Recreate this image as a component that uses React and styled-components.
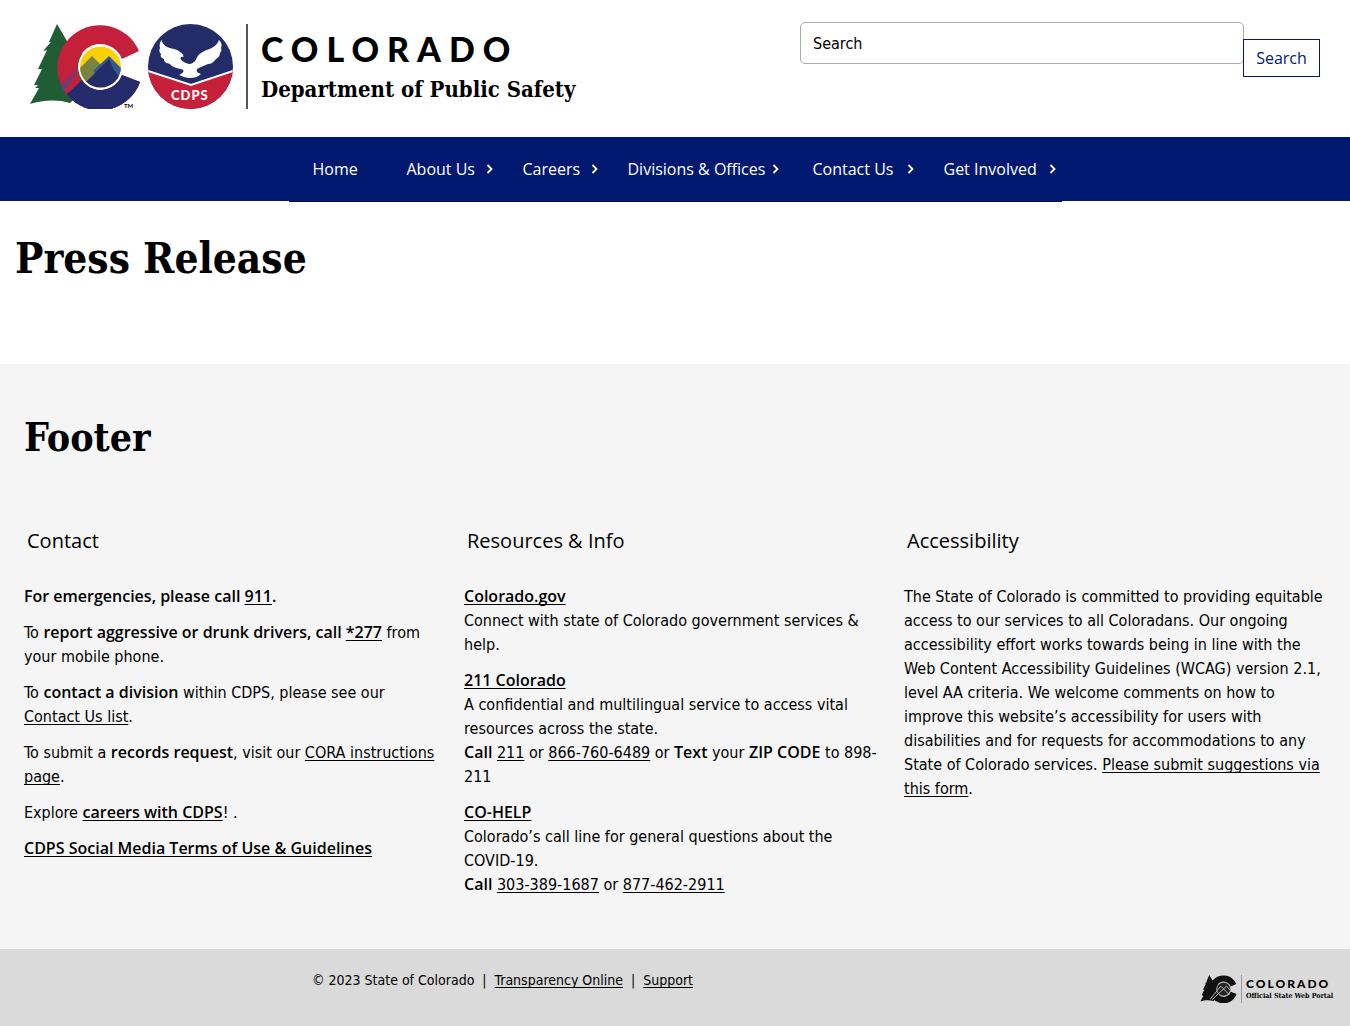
import React from "react";
import styled, { createGlobalStyle } from "styled-components";

const body = `"DejaVu Sans Condensed", "Open Sans", sans-serif`;
const sans = `"Open Sans", sans-serif`;
const slab = `"DejaVu Serif Condensed", "DejaVu Serif", serif`;

const GlobalStyle = createGlobalStyle`
  *, *::before, *::after { box-sizing: border-box; }
  body {
    margin: 0;
    background: #fff;
    color: #000;
    font: 16px/24px ${body};
  }
  h1, h2, h3, p, ul { margin: 0; padding: 0; }
  a { color: inherit; }
  svg { display: block; flex: none; }
`;

const Header = styled.header`
  display: flex;
  justify-content: space-between;
  align-items: flex-start;
  padding: 22px 30px 28px;
`;

const Brand = styled.a`
  display: flex;
  gap: 8px;
  margin-top: 2px;
  text-decoration: none;
`;

const BrandText = styled.span`
  display: flex;
  flex-direction: column;
  gap: 8px;
  margin-left: 5px;
  padding: 5px 0 0 13px;
  border-left: 2px solid #58585a;
  white-space: nowrap;
`;

const BrandState = styled.span`
  font: 900 34px/40px Lato, sans-serif;
  letter-spacing: 8px;
`;

const BrandDept = styled.span`
  font: bold 22px/24px ${slab};
`;

const SearchForm = styled.form`
  display: flex;
  align-items: flex-start;
  width: 520px;
`;

const SearchInput = styled.input`
  flex: 1;
  min-width: 0;
  height: 42px;
  padding: 0 12px;
  border: 1px solid #aaa;
  border-radius: 5px;
  color: #000;
  font: 16px/24px ${body};
  &::placeholder { color: #000; opacity: 1; }
`;

const SearchButton = styled.button`
  width: 77px;
  height: 38px;
  margin: 17px 0 0 -1px;
  padding: 0;
  border: 1px solid #001970;
  background: #fff;
  color: #001970;
  font: 16px/24px ${sans};
`;

const NavBar = styled.nav`
  height: 64px;
  background: #001970;
`;

const NavList = styled.ul`
  display: flex;
  justify-content: center;
  width: fit-content;
  height: 65px;
  margin: 0 auto;
  border-bottom: 1px solid #001450;
  list-style: none;
`;

const NavItem = styled.li`
  width: ${(p) => p.$width}px;
`;

const NavLink = styled.a`
  display: flex;
  align-items: center;
  justify-content: space-between;
  height: 64px;
  padding: 0 ${(p) => (p.$tight ? 10 : 6)}px 0 24px;
  color: #fff;
  font: 16px/24px ${sans};
  text-decoration: none;
  white-space: nowrap;
`;

const Main = styled.main`
  padding: 31px 15px 78px;
`;

const PageTitle = styled.h1`
  font: bold 42px/54px ${slab};
`;

const Footer = styled.footer`
  padding: 47px 24px 52px;
  background: #f5f5f5;
`;

const FooterTitle = styled.h2`
  font: bold 39px/52px ${slab};
`;

const Columns = styled.div`
  display: grid;
  grid-template-columns: repeat(3, 1fr);
  gap: 18px;
  margin-top: 62px;
`;

const ColumnTitle = styled.h3`
  margin-bottom: 28px;
  padding-left: 3px;
  font: 20px/32px ${sans};
`;

const Text = styled.p`
  & + & { margin-top: 12px; }
`;

const Link = styled.a`
  text-decoration: underline;
  text-decoration-thickness: 1px;
  text-underline-offset: 2px;
  text-decoration-skip-ink: none;
  white-space: ${(p) => (p.$nowrap ? "nowrap" : "inherit")};
`;

const Strong = styled.strong`
  font-family: ${sans};
  font-weight: 600;
  line-height: 16px;
`;

const BottomBar = styled.div`
  display: grid;
  grid-template-columns: 1fr 345px;
  align-items: start;
  padding-top: 19px;
  height: 78px;
  background: #dadada;
`;

const Copyright = styled.p`
  font-size: 14px;
  line-height: 24px;
  text-align: center;
  white-space: pre;
`;

const Portal = styled.a`
  display: flex;
  justify-content: flex-end;
  gap: 4px;
  margin-top: 7px;
  padding-right: 15px;
  text-decoration: none;
`;

const PortalText = styled.span`
  display: flex;
  flex-direction: column;
  width: 94px;
  padding: 2px 0 0 4px;
  border-left: 1px solid #999;
  white-space: nowrap;
`;

const PortalState = styled.span`
  font: 900 12px/13px Lato, sans-serif;
  letter-spacing: 2px;
`;

const PortalName = styled.span`
  font: bold 7px/12px ${slab};
`;

const TREE =
  "M27 0L19 18L21 18L13 27L17 26L8 45L12 45L4 61L8 61L5 64L9 64L0 80C12 76 28 75 40 79L60 60L50 20L37 17Z";
const C_SHAPE =
  "M109 27A42.5 42.5 0 1 0 110 58L92 51A23 23 0 1 1 92 35Z";

const StateLogo = () => (
  <svg width="110" height="85" viewBox="0 0 110 85" aria-hidden="true">
    <defs>
      <clipPath id="c-shape"><path d={C_SHAPE} /></clipPath>
      <clipPath id="sun"><circle cx="70.500" cy="43" r="20.500" /></clipPath>
    </defs>
    <path d={TREE} fill="#205c34" />
    <g clipPath="url(#c-shape)">
      <rect width="110" height="85" fill="#c5203b" />
      <path d="M50 43L20 71L36 71L64 46L64 72L110 43L110 85L30 85L30 76Z" fill="#713c70" />
      <path d="M36 71L54 54L70 62L88 46L110 46V85H36Z" fill="#242c6c" />
    </g>
    <circle cx="70.500" cy="43" r="22.500" fill="#fff" />
    <g clipPath="url(#sun)">
      <rect x="48" y="20" width="45" height="46" fill="#fcd006" />
      <path d="M46 48L62 32L76 46L54 68L46 62Z" fill="#788440" />
      <path d="M63 47L79 32L96 49V62L80 60Z" fill="#315c8c" />
      <path d="M46 68L79 35L84 46L94 58V68H46Z" fill="#242c6c" />
    </g>
    <text x="94" y="84" fontFamily="Lato, sans-serif" fontSize="6" fontWeight="700">TM</text>
  </svg>
);

const CdpsLogo = () => (
  <svg width="85" height="85" viewBox="0 0 85 85" aria-hidden="true">
    <defs>
      <clipPath id="badge"><circle cx="42.500" cy="42.500" r="42.500" /></clipPath>
    </defs>
    <g clipPath="url(#badge)">
      <rect width="85" height="85" fill="#222c69" />
      <path d="M0 47L43 61L85 47V85H0Z" fill="#c6203a" />
      <path d="M0 47L43 61L85 47" fill="none" stroke="#fff" strokeWidth="2" />
    </g>
    <path
      d="M13.500 16C15 22 20 24 26 25C33 27 36 31 35.500 33C31 32 32 36 36 38C39 40 43 41 46 38C49 36 48 32 53 29C58 25 68 25 71 16C74 19 74 22 73 24C74 26 73 28 72 29C72 32 70 34 68 35C66 38 63 40 60 40C56 42 52 43 49 45C48 48 50 49 53 50C50 53 45 54 42 54C38 54 34 52 31 51C36 49 37 46 33 45C28 44 24 43 22 40C18 39 16 38 16 35C13 34 12 32 13 30C11 28 11 26 12 24C11 21 12 18 13.500 16Z"
      fill="#fff"
    />
    <text x="23" y="76" fill="#fff" fontFamily="Lato, sans-serif" fontSize="13" fontWeight="900" letterSpacing="1">CDPS</text>
  </svg>
);

const PortalLogo = () => (
  <svg width="37" height="28" viewBox="0 0 110 85" aria-hidden="true">
    <path d={TREE} fill="#111" />
    <path d={C_SHAPE} fill="#111" />
    <circle cx="70.500" cy="43" r="21" fill="#222" stroke="#aaa" strokeWidth="3" />
    <path d="M30 73L62 34L88 60M36 75L79 34L93 48" fill="none" stroke="#bbb" strokeWidth="3" />
  </svg>
);

const Chevron = () => (
  <svg width="7" height="10" viewBox="0 0 7 10" aria-hidden="true">
    <path d="M1.500 1L5.500 5L1.500 9" fill="none" stroke="#fff" strokeWidth="1.800" />
  </svg>
);

const NAV = [
  { label: "Home", width: 94, plain: true },
  { label: "About Us", width: 116 },
  { label: "Careers", width: 105 },
  { label: "Divisions & Offices", width: 185, tight: true },
  { label: "Contact Us", width: 131 },
  { label: "Get Involved", width: 142 },
];

export default function App() {
  return (
    <>
      <GlobalStyle />
      <Header>
        <Brand href="#home">
          <StateLogo />
          <CdpsLogo />
          <BrandText>
            <BrandState>COLORADO</BrandState>
            <BrandDept>Department of Public Safety</BrandDept>
          </BrandText>
        </Brand>
        <SearchForm role="search">
          <SearchInput type="search" placeholder="Search" aria-label="Search" />
          <SearchButton type="button">Search</SearchButton>
        </SearchForm>
      </Header>

      <NavBar>
        <NavList>
          {NAV.map(({ label, width, plain, tight }) => (
            <NavItem key={label} $width={width}>
              <NavLink href="#menu" $tight={tight}>
                {label}
                {!plain && <Chevron />}
              </NavLink>
            </NavItem>
          ))}
        </NavList>
      </NavBar>

      <Main>
        <PageTitle>Press Release</PageTitle>
      </Main>

      <Footer>
        <FooterTitle>Footer</FooterTitle>
        <Columns>
          <section>
            <ColumnTitle>Contact</ColumnTitle>
            <Text><Strong>For emergencies, please call <Link href="#911">911</Link>.</Strong></Text>
            <Text>
              To <Strong>report aggressive or drunk drivers, call <Link href="#277">*277</Link></Strong> from your mobile phone.
            </Text>
            <Text>
              To <Strong>contact a division</Strong> within CDPS, please see our <Link href="#contact" $nowrap>Contact Us list</Link>.
            </Text>
            <Text>
              To submit a <Strong>records request</Strong>, visit our <Link href="#cora">CORA instructions page</Link>.
            </Text>
            <Text>Explore <Strong><Link href="#careers">careers with CDPS</Link></Strong>! .</Text>
            <Text><Strong><Link href="#social">CDPS Social Media Terms of Use &amp; Guidelines</Link></Strong></Text>
          </section>
          <section>
            <ColumnTitle>Resources &amp; Info</ColumnTitle>
            <Text>
              <Strong><Link href="#colorado">Colorado.gov</Link></Strong><br />
              Connect with state of Colorado government services &amp; help.
            </Text>
            <Text>
              <Strong><Link href="#211">211 Colorado</Link></Strong><br />
              A confidential and multilingual service to access vital resources across the state.<br />
              <Strong>Call</Strong> <Link href="#211">211</Link> or <Link href="#866">866-760-6489</Link> or <Strong>Text</Strong> your <Strong>ZIP CODE</Strong> to 898-211
            </Text>
            <Text>
              <Strong><Link href="#cohelp">CO-HELP</Link></Strong><br />
              Colorado’s call line for general questions about the COVID-19.<br />
              <Strong>Call</Strong> <Link href="#303">303-389-1687</Link> or <Link href="#877">877-462-2911</Link>
            </Text>
          </section>
          <section>
            <ColumnTitle>Accessibility</ColumnTitle>
            <Text>
              The State of Colorado is committed to providing equitable access to our services to all Coloradans. Our ongoing accessibility effort works towards being in line with the Web Content Accessibility Guidelines (WCAG) version 2.1, level AA criteria. We welcome comments on how to improve this website’s accessibility for users with disabilities and for requests for accommodations to any State of Colorado services. <Link href="#form">Please submit suggestions via this form</Link>.
            </Text>
          </section>
        </Columns>
      </Footer>

      <BottomBar>
        <Copyright>
          © 2023 State of Colorado  |  <Link href="#transparency">Transparency Online</Link>  |  <Link href="#support">Support</Link>
        </Copyright>
        <Portal href="#portal">
          <PortalLogo />
          <PortalText>
            <PortalState>COLORADO</PortalState>
            <PortalName>Official State Web Portal</PortalName>
          </PortalText>
        </Portal>
      </BottomBar>
    </>
  );
}
